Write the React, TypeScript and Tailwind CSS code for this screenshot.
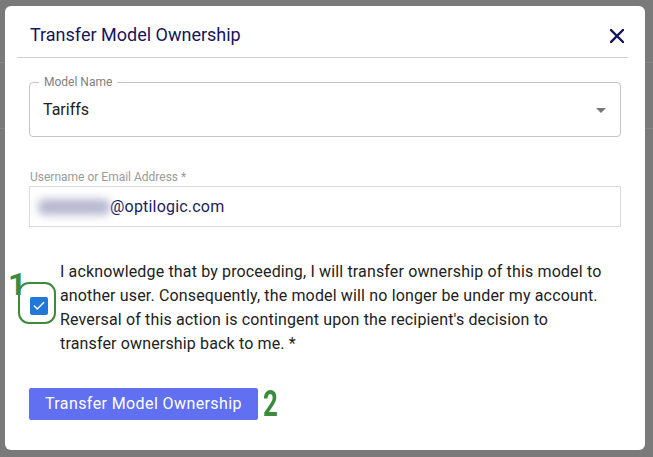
import { Check } from 'lucide-react';

export default function App() {
  return (
    <div className="relative w-[653px] h-[457px] overflow-hidden bg-[#7a7a7a] font-['Roboto',sans-serif]">
      {/* faint page lines behind the overlay */}
      <div className="absolute left-0 right-0 top-[62px] h-px bg-[#858585]" />
      <div className="absolute left-0 right-0 top-[128px] h-px bg-[#858585]" />

      <div className="relative ml-[5px] mt-[6px] w-[640px] h-[444px] rounded-[6px] bg-white">
        {/* Header */}
        <div className="flex items-center justify-between pl-[25px] pr-[21px] pt-[17px] pb-[10px]">
          <h2 className="text-[18px] leading-[24px] text-[#16165a]">Transfer Model Ownership</h2>
          <svg width="14" height="14" viewBox="0 0 14 14" className="mt-[1px]">
            <path d="M1 1 L13 13 M13 1 L1 13" stroke="#16165a" strokeWidth="2.4" strokeLinecap="square" />
          </svg>
        </div>
        <div className="ml-[12px] mr-[17px] h-px bg-[#cfcfcf]" />

        <div className="px-[24px]">
          {/* Model Name select */}
          <div className="relative mt-[24px] h-[55px] rounded-[4px] border border-[#c4c4c4] flex items-center justify-between pl-[13px] pr-[14px]">
            <span className="absolute left-[9px] top-[-9px] bg-white px-[5px] text-[12px] leading-[16px] text-[#808080]">
              Model Name
            </span>
            <span className="text-[16px] text-[#222]">Tariffs</span>
            <svg width="10" height="5" viewBox="0 0 10 5" className="mt-[1px]">
              <path d="M0 0 L10 0 L5 5 Z" fill="#777" />
            </svg>
          </div>

          {/* Username */}
          <div className="mt-[32px] pl-[1px] text-[12px] leading-[16px] text-[#9a9a9a]">Username or Email Address *</div>
          <div className="mt-[1px] h-[41px] border border-[#dcdcdc] flex items-center pl-[8px]">
            <span className="w-[72px] h-[16px] rounded-[6px] bg-[#a6a6c4] blur-[4px] opacity-80" />
            <span className="text-[16px] tracking-[0.2px] text-[#1c1c5e]">@optilogic.com</span>
          </div>

          {/* Acknowledge */}
          <div className="mt-[32px] flex">
            <div className="relative w-[31px] shrink-0 pl-[1px]">
              <div className="mt-[38px] w-[18px] h-[18px] rounded-[2px] bg-[#2178d8] flex items-center justify-center">
                <Check size={14} strokeWidth={2.5} color="white" />
              </div>
              <div className="absolute left-[-11px] top-[23px] w-[38px] h-[42px] rounded-[11px] border-2 border-[#3d8a3f]" />
              <span className="absolute left-[-21px] top-[9px] text-[32px] leading-[32px] font-bold text-[#3d8a3f]">1</span>
            </div>
            <p className="mt-[1px] text-[16px] leading-[24px] tracking-[0.15px] text-[#222]">
              I acknowledge that by proceeding, I will transfer ownership of this model to
              <br />
              another user. Consequently, the model will no longer be under my account.
              <br />
              Reversal of this action is contingent upon the recipient's decision to
              <br />
              transfer ownership back to me. *
            </p>
          </div>

          {/* Button */}
          <div className="mt-[32px] flex items-center">
            <button className="h-[32px] px-[16px] rounded-[2px] bg-[#6070f0] text-white text-[16px] leading-[32px] tracking-[0.4px]">
              Transfer Model Ownership
            </button>
            <span className="ml-[2px] text-[36px] leading-[32px] font-bold text-[#3d8a3f] inline-block scale-x-[0.72]">2</span>
          </div>
        </div>
      </div>
    </div>
  );
}
